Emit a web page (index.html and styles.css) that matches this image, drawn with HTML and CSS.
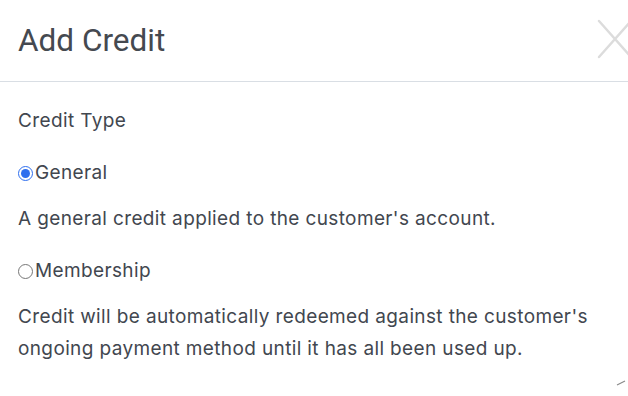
FILE: index.html
```html
<!DOCTYPE html>
<html>
<head>
<meta charset="utf-8">
<link rel="stylesheet" href="styles.css">
</head>
<body>
<div class="modal">
  <div class="header">
    <h1 class="title">Add Credit</h1>
    <svg class="close" width="34" height="40" viewBox="0 0 34 40"><path d="M2 2 L34 38 M2 38 L34 2" stroke="#dcdcdc" stroke-width="2.4" stroke-linecap="round" fill="none"/></svg>
  </div>
  <div class="body">
    <div class="label">Credit Type</div>
    <label class="option first"><input type="radio" name="t" checked>General</label>
    <p class="desc">A general credit applied to the customer's account.</p>
    <label class="option"><input type="radio" name="t">Membership</label>
    <p class="desc">Credit will be automatically redeemed against the customer's ongoing payment method until it has all been used up.</p>
  </div>
  <svg class="grip" width="10" height="8" viewBox="0 0 10 8"><path d="M1 7 L9 3" stroke="#888" stroke-width="1.2" fill="none"/></svg>
</div>
</body>
</html>
```
FILE: styles.css
```css
html, body { margin: 0; padding: 0; background: #fff; }
body { width: 628px; height: 396px; overflow: hidden; font-family: Inter, "Noto Sans", sans-serif; color: #42474f; }
.modal { position: relative; width: 628px; height: 396px; }
.header { height: 82px; border-bottom: 1px solid #d9dee4; display: flex; align-items: center; padding-left: 18px; box-sizing: border-box; position: relative; overflow: hidden; }
.title { margin: 0; font-family: Roboto, sans-serif; font-weight: 400; font-size: 31.5px; color: #454950; }
.close { position: absolute; left: 597px; top: 19px; }
.body { padding: 26px 18px 0 18px; }
.label, .option, .desc { font-size: 19px; letter-spacing: 0.37px; }
.label { line-height: 26px; }
.option { display: flex; align-items: center; line-height: 26px; margin-top: 23px; }
.option.first { margin-top: 26px; }
.option input { margin: 0 2px 0 0; width: 15px; height: 15px; accent-color: #2f6fee; }
.desc { margin: 17px 0 0 0; line-height: 32px; }
.grip { position: absolute; left: 616px; top: 378px; }
```
